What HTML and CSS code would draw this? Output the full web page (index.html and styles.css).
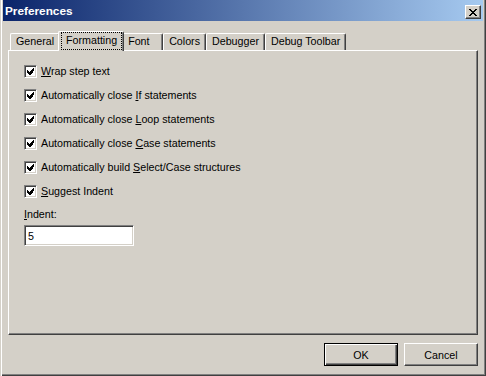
FILE: index.html
```html
<!DOCTYPE html>
<html lang="en">
<head>
  <meta charset="UTF-8">
  <title>Preferences</title>
  <link rel="stylesheet" href="styles.css">
</head>
<body>
  <div class="window">
    <div class="titlebar">
      <span class="title">Preferences</span>
      <button class="close" aria-label="Close">
        <svg width="8" height="7" viewBox="0 0 8 7" shape-rendering="crispEdges"><path d="M0 0h2v1H0zM6 0h2v1H6zM1 1h2v1H1zM5 1h2v1H5zM2 2h4v1H2zM3 3h2v1H3zM2 4h4v1H2zM1 5h2v1H1zM5 5h2v1H5zM0 6h2v1H0zM6 6h2v1H6z" fill="#000"/></svg>
      </button>
    </div>
    <div class="content">
      <div class="tabs" role="tablist">
        <div class="tab" role="tab">General</div>
        <div class="tab selected" role="tab" aria-selected="true"><span class="focus">Formatting</span></div>
        <div class="tab" role="tab">Font</div>
        <div class="tab" role="tab">Colors</div>
        <div class="tab" role="tab">Debugger</div>
        <div class="tab" role="tab">Debug Toolbar</div>
      </div>
      <div class="panel" role="tabpanel">
        <div class="options">
          <label class="option"><span class="checkbox"><svg width="7" height="7" viewBox="0 0 7 7" shape-rendering="crispEdges"><path d="M6 0h1v3H6zM5 1h1v4H5zM4 2h1v4H4zM3 3h1v4H3zM2 4h1v3H2zM1 3h1v3H1zM0 2h1v3H0z" fill="#000"/></svg></span><span><u>W</u>rap step text</span></label>
          <label class="option"><span class="checkbox"><svg width="7" height="7" viewBox="0 0 7 7" shape-rendering="crispEdges"><path d="M6 0h1v3H6zM5 1h1v4H5zM4 2h1v4H4zM3 3h1v4H3zM2 4h1v3H2zM1 3h1v3H1zM0 2h1v3H0z" fill="#000"/></svg></span><span>Automatically close <u>I</u>f statements</span></label>
          <label class="option"><span class="checkbox"><svg width="7" height="7" viewBox="0 0 7 7" shape-rendering="crispEdges"><path d="M6 0h1v3H6zM5 1h1v4H5zM4 2h1v4H4zM3 3h1v4H3zM2 4h1v3H2zM1 3h1v3H1zM0 2h1v3H0z" fill="#000"/></svg></span><span>Automatically close <u>L</u>oop statements</span></label>
          <label class="option"><span class="checkbox"><svg width="7" height="7" viewBox="0 0 7 7" shape-rendering="crispEdges"><path d="M6 0h1v3H6zM5 1h1v4H5zM4 2h1v4H4zM3 3h1v4H3zM2 4h1v3H2zM1 3h1v3H1zM0 2h1v3H0z" fill="#000"/></svg></span><span>Automatically close <u>C</u>ase statements</span></label>
          <label class="option"><span class="checkbox"><svg width="7" height="7" viewBox="0 0 7 7" shape-rendering="crispEdges"><path d="M6 0h1v3H6zM5 1h1v4H5zM4 2h1v4H4zM3 3h1v4H3zM2 4h1v3H2zM1 3h1v3H1zM0 2h1v3H0z" fill="#000"/></svg></span><span>Automatically build <u>S</u>elect/Case structures</span></label>
          <label class="option"><span class="checkbox"><svg width="7" height="7" viewBox="0 0 7 7" shape-rendering="crispEdges"><path d="M6 0h1v3H6zM5 1h1v4H5zM4 2h1v4H4zM3 3h1v4H3zM2 4h1v3H2zM1 3h1v3H1zM0 2h1v3H0z" fill="#000"/></svg></span><span><u>S</u>uggest Indent</span></label>
        </div>
        <label class="field-label" for="indent"><u>I</u>ndent:</label>
        <input class="field" id="indent" type="text" value="5">
      </div>
      <div class="actions">
        <button class="btn default">OK</button>
        <button class="btn">Cancel</button>
      </div>
    </div>
  </div>
</body>
</html>
```

FILE: styles.css
```css
*, *::before, *::after {
  margin: 0;
  padding: 0;
  box-sizing: border-box;
}
body {
  font-family: "Liberation Sans", Arial, sans-serif;
  font-size: 10.7px;
  color: #000;
  background: #d4d0c8;
}
.window {
  display: flex;
  flex-direction: column;
  width: 486px;
  height: 376px;
  padding: 0 3px 2px 3px;
  background: #d4d0c8;
  box-shadow: inset 1px 0 #d4d0c8, inset 2px 0 #fff, inset -1px -1px #404040, inset -2px -2px #808080;
}
.titlebar {
  display: flex;
  align-items: flex-start;
  height: 21px;
  padding: 0 2px;
  background: linear-gradient(to right, #0a246a, #a6caf0);
}
.title {
  color: #fff;
  font-weight: bold;
  font-size: 11.8px;
  line-height: 22px;
}
.close {
  display: flex;
  align-items: center;
  justify-content: center;
  width: 16px;
  height: 14px;
  margin: 5px 0 0 auto;
  background: #d4d0c8;
  border: 1px solid;
  border-color: #fff #404040 #404040 #fff;
  box-shadow: inset -1px -1px #808080;
}
.content {
  display: flex;
  flex-direction: column;
  flex: 1;
  padding: 0 5px;
}
.tabs {
  display: flex;
  align-items: flex-end;
  padding: 10px 0 0 2px;
}
.tab {
  height: 17px;
  min-width: 41px;
  padding: 0 5px;
  line-height: 15px;
  white-space: nowrap;
  border-top: 1px solid #fff;
  border-left: 1px solid #fff;
  border-right: 1px solid #404040;
  border-radius: 2px 2px 0 0;
  box-shadow: inset -1px 0 #808080;
}
.tab.selected {
  position: relative;
  z-index: 1;
  height: 20px;
  margin: 0 -2px -1px;
  padding: 0 1px 1px 2px;
  background: #d4d0c8;
}
.focus {
  display: block;
  height: 100%;
  padding: 0 4px;
  line-height: 15px;
  border: 1px dotted #000;
}
.panel {
  height: 285px;
  padding: 14px 15px;
  border: 1px solid;
  border-color: #fff #404040 #404040 #fff;
  box-shadow: inset -1px -1px #808080;
}
.options {
  display: flex;
  flex-direction: column;
  gap: 11px;
}
.option {
  display: flex;
  align-items: center;
  gap: 4px;
  height: 13px;
  line-height: 13px;
}
.checkbox {
  display: flex;
  align-items: center;
  justify-content: center;
  width: 13px;
  height: 13px;
  background: #fff;
  border: 1px solid;
  border-color: #808080 #fff #fff #808080;
  box-shadow: inset 1px 1px #404040, inset -1px -1px #d4d0c8;
}
.field-label {
  display: block;
  margin-top: 10px;
  line-height: 13px;
}
.field {
  display: block;
  width: 110px;
  height: 21px;
  margin-top: 4px;
  padding: 0 3px;
  font: inherit;
  color: #000;
  background: #fff;
  border: 1px solid;
  border-color: #808080 #fff #fff #808080;
  box-shadow: inset 1px 1px #404040, inset -1px -1px #d4d0c8;
  outline: none;
}
.actions {
  display: flex;
  justify-content: flex-end;
  gap: 6px;
  margin-top: 8px;
}
.btn {
  width: 74px;
  height: 23px;
  font: inherit;
  color: #000;
  background: #d4d0c8;
  border: 1px solid;
  border-color: #fff #404040 #404040 #fff;
  box-shadow: inset -1px -1px #808080;
}
.btn.default {
  border-color: #000;
  box-shadow: inset 1px 1px #fff, inset -1px -1px #404040, inset -2px -2px #808080;
}
```
